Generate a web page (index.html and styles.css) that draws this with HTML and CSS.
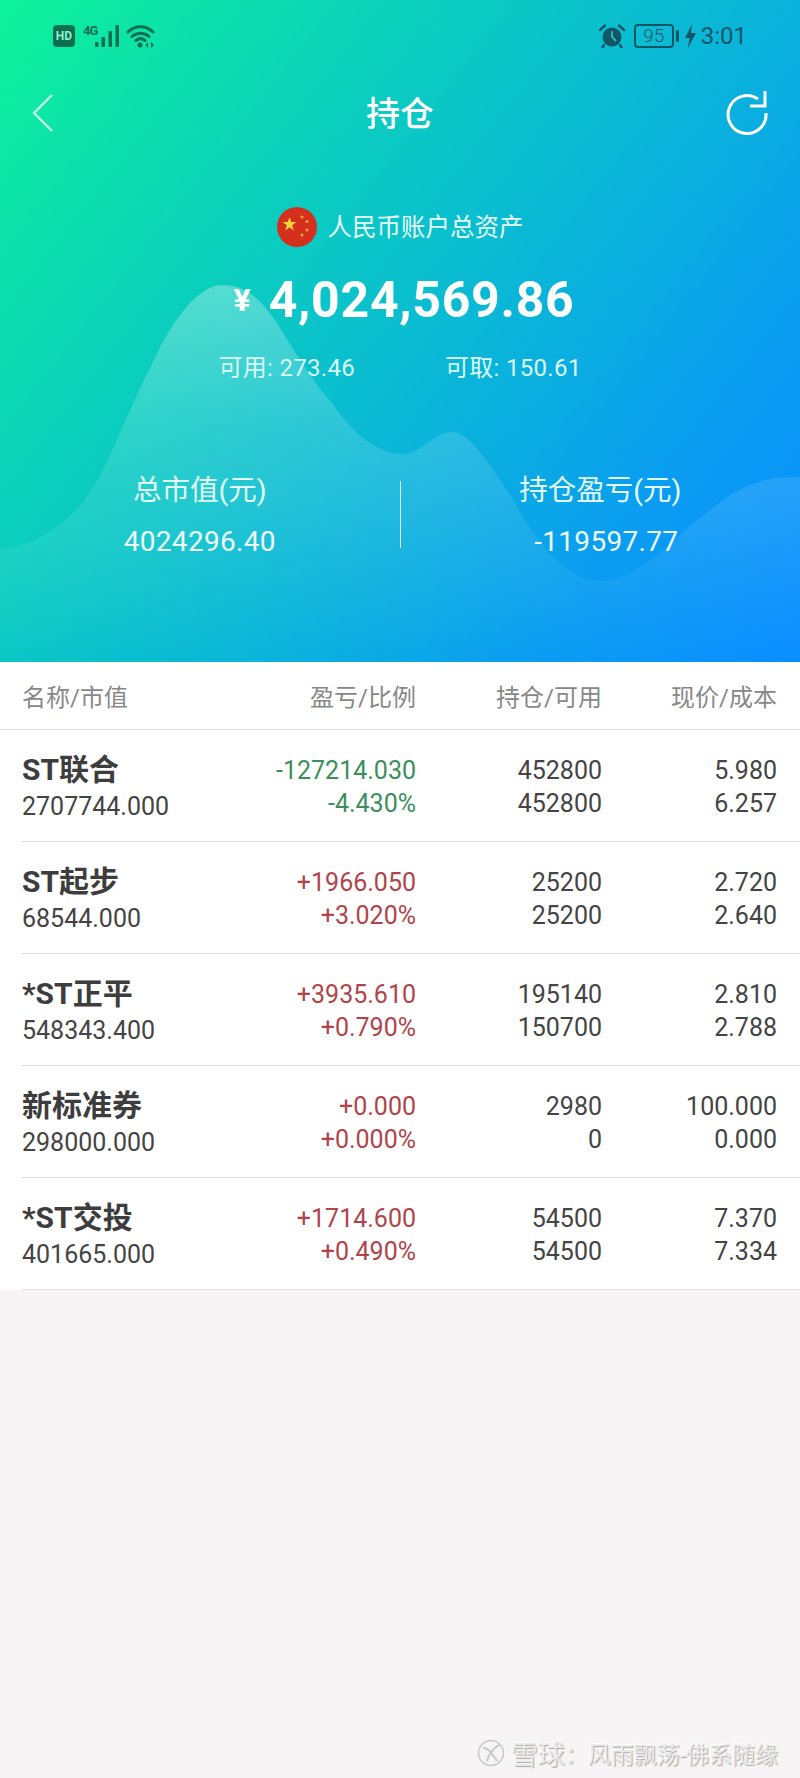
FILE: index.html
```html
<!DOCTYPE html>
<html lang="zh-CN">
<head>
    <meta charset="UTF-8">
    <meta name="viewport" content="width=device-width, initial-scale=1.0">
    <title>持仓</title>
    <link rel="stylesheet" href="styles.css">
</head>
<body>
    <div class="page">
        <div class="hero">
            <svg class="hero-hill" width="800" height="662" viewBox="0 0 800 662">
                <defs>
                    <linearGradient id="hill" x1="0" y1="0" x2="0" y2="1">
                        <stop offset="0" stop-color="#fff" stop-opacity="0.3"/>
                        <stop offset="0.35" stop-color="#fff" stop-opacity="0.15"/>
                        <stop offset="0.7" stop-color="#fff" stop-opacity="0.07"/>
                        <stop offset="1" stop-color="#fff" stop-opacity="0"/>
                    </linearGradient>
                </defs>
                <path fill="url(#hill)" d="M0 549 C30 547 60 530 85 500 C110 465 125 415 153 362 C175 315 200 285 222 285 C250 285 265 305 280 328 C300 360 315 385 332 403 C350 430 375 454 403 454 C420 454 435 432 452 432 C470 432 490 465 510 495 C535 540 565 581 598 581 C640 581 670 540 710 510 C740 485 765 476 800 477 L800 662 L0 662 Z"/>
            </svg>

            <div class="status-bar">
                <div class="status-left">
                    <span class="hd-badge">HD</span>
                    <svg class="signal" width="37" height="24" viewBox="0 0 37 24">
                        <text x="0" y="11" class="signal-text">4G</text>
                        <rect x="12" y="18" width="3.500" height="5" rx="1"/>
                        <rect x="18.500" y="13" width="3.500" height="10" rx="1"/>
                        <rect x="25.500" y="7" width="3.500" height="16" rx="1"/>
                        <rect x="32.500" y="1" width="3.500" height="22" rx="1"/>
                    </svg>
                    <svg class="wifi" width="30" height="24" viewBox="0 0 30 24">
                        <path d="M2 8 C9 1 20 1 27 8 M6 12.500 C11 8 18 8 23 12.500 M10 16.500 C13 14 16 14 19 16.500" fill="none" stroke="#0b6f50" stroke-width="3" stroke-linecap="round"/>
                        <circle cx="14" cy="21" r="2.500" fill="#0b6f50"/>
                        <path d="M22 18 L19.500 21 L22 24 Z M25 18 L28 21 L25 24 Z" fill="#0b6f50"/>
                    </svg>
                </div>
                <div class="status-right">
                    <svg class="alarm" width="26" height="24" viewBox="0 0 26 24">
                        <circle cx="13" cy="13" r="9.500" fill="#0f5666"/>
                        <path d="M13 7 V13 L17 17" fill="none" stroke="#2bbcc0" stroke-width="1.800"/>
                        <path d="M1 6 L6 1.500 M25 6 L20 1.500 M5 21 L3.500 23.500 M21 21 L22.500 23.500" stroke="#0f5666" stroke-width="2.500" stroke-linecap="round"/>
                    </svg>
                    <span class="battery"><span class="battery-level">95</span></span>
                    <span class="battery-cap"></span>
                    <svg class="bolt" width="11" height="24" viewBox="0 0 11 24">
                        <path d="M7 0 L0 14 H4.500 L3 24 L11 9 H6 Z" fill="#0f5666"/>
                    </svg>
                    <span class="clock">3:01</span>
                </div>
            </div>

            <div class="nav">
                <svg class="nav-back" width="24" height="40" viewBox="0 0 24 40">
                    <path d="M21 2 L3 20 L21 38" fill="none" stroke="#c5fbe6" stroke-width="2.400"/>
                </svg>
                <div class="nav-title">持仓</div>
                <svg width="44" height="44" viewBox="0 0 44 44">
                    <path d="M41 22 A19 19 0 1 1 33 8" fill="none" stroke="#fff" stroke-width="3"/>
                    <path d="M40 0 V15 H25" fill="none" stroke="#fff" stroke-width="3"/>
                </svg>
            </div>

            <div class="account">
                <svg class="flag" width="40" height="40" viewBox="0 0 40 40">
                    <circle cx="20" cy="20" r="20" fill="#d5301e"/>
                    <polygon fill="#fbd33a" points="12.500,10 14.200,15 19.500,15 15.200,18.200 16.800,23.500 12.500,20.300 8.200,23.500 9.800,18.200 5.500,15 10.800,15"/>
                    <circle cx="25" cy="10" r="1.500" fill="#f2a93b"/>
                    <circle cx="30" cy="14.500" r="1.500" fill="#f2a93b"/>
                    <circle cx="30" cy="23" r="1.500" fill="#f2a93b"/>
                    <circle cx="25" cy="28" r="1.500" fill="#f2a93b"/>
                </svg>
                <span class="account-label">人民币账户总资产</span>
            </div>

            <div class="total">
                <span class="total-yen">¥</span>
                <span class="total-value">4,024,569.86</span>
            </div>

            <div class="funds">
                <span>可用: 273.46</span>
                <span>可取: 150.61</span>
            </div>

            <div class="summary">
                <div class="summary-col">
                    <div class="summary-label">总市值(元)</div>
                    <div class="summary-value">4024296.40</div>
                </div>
                <div class="summary-divider"></div>
                <div class="summary-col">
                    <div class="summary-label">持仓盈亏(元)</div>
                    <div class="summary-value summary-loss">-119597.77</div>
                </div>
            </div>
        </div>

        <div class="table">
            <div class="table-head">
                <span class="col-name">名称/市值</span>
                <span class="col-profit">盈亏/比例</span>
                <span class="col-qty">持仓/可用</span>
                <span class="col-price">现价/成本</span>
            </div>

            <div class="table-row">
                <div class="col-name">
                    <div class="stock-name">ST联合</div>
                    <div class="stock-value">2707744.000</div>
                </div>
                <div class="col-profit down"><div>-127214.030</div><div>-4.430%</div></div>
                <div class="col-qty"><div>452800</div><div>452800</div></div>
                <div class="col-price"><div>5.980</div><div>6.257</div></div>
            </div>

            <div class="table-row">
                <div class="col-name">
                    <div class="stock-name">ST起步</div>
                    <div class="stock-value">68544.000</div>
                </div>
                <div class="col-profit up"><div>+1966.050</div><div>+3.020%</div></div>
                <div class="col-qty"><div>25200</div><div>25200</div></div>
                <div class="col-price"><div>2.720</div><div>2.640</div></div>
            </div>

            <div class="table-row">
                <div class="col-name">
                    <div class="stock-name">*ST正平</div>
                    <div class="stock-value">548343.400</div>
                </div>
                <div class="col-profit up"><div>+3935.610</div><div>+0.790%</div></div>
                <div class="col-qty"><div>195140</div><div>150700</div></div>
                <div class="col-price"><div>2.810</div><div>2.788</div></div>
            </div>

            <div class="table-row">
                <div class="col-name">
                    <div class="stock-name">新标准券</div>
                    <div class="stock-value">298000.000</div>
                </div>
                <div class="col-profit up"><div>+0.000</div><div>+0.000%</div></div>
                <div class="col-qty"><div>2980</div><div>0</div></div>
                <div class="col-price"><div>100.000</div><div>0.000</div></div>
            </div>

            <div class="table-row">
                <div class="col-name">
                    <div class="stock-name">*ST交投</div>
                    <div class="stock-value">401665.000</div>
                </div>
                <div class="col-profit up"><div>+1714.600</div><div>+0.490%</div></div>
                <div class="col-qty"><div>54500</div><div>54500</div></div>
                <div class="col-price"><div>7.370</div><div>7.334</div></div>
            </div>
        </div>

        <div class="watermark">
            <svg class="watermark-logo" width="28" height="28" viewBox="0 0 28 28">
                <circle cx="14" cy="14" r="12.500" fill="none" stroke="#c9c6c7" stroke-width="1.500"/>
                <path d="M6 9 C11 8 15 15 20 22 M22 6 C17 9 12 14 10 22" fill="none" stroke="#c9c6c7" stroke-width="2"/>
            </svg>
            <span class="watermark-site">雪球</span>
            <span class="watermark-user">：风雨飘荡-佛系随缘</span>
        </div>
    </div>
</body>
</html>
```

FILE: styles.css
```css
* {
    box-sizing: border-box;
}
body {
    margin: 0;
    background-color: #f7f4f5;
    font-family: Roboto, "Noto Sans CJK SC", sans-serif;
}
.page {
    width: 800px;
    height: 1778px;
    display: flex;
    flex-direction: column;
    overflow: hidden;
}

/* top gradient block */
.hero {
    position: relative;
    height: 662px;
    color: #ffffff;
    background: linear-gradient(128deg, #0ef29a 0%, #0bd3b8 28%, #0ab8d6 55%, #0a9cf2 80%, #0a8dff 100%);
}
.hero-hill {
    position: absolute;
    top: 0;
    left: 0;
}
.status-bar {
    position: relative;
    display: flex;
    justify-content: space-between;
    align-items: center;
    height: 71px;
    padding: 0 53px;
}
.status-left,
.status-right {
    display: flex;
    align-items: center;
}
.hd-badge {
    width: 22px;
    height: 22px;
    margin-right: 8px;
    border-radius: 4px;
    background-color: #0b6f50;
    color: #8ff0cb;
    font-size: 12px;
    font-weight: 700;
    line-height: 22px;
    text-align: center;
}
.signal {
    margin-right: 6px;
    fill: #0b6f50;
}
.signal-text {
    font-size: 13px;
    font-weight: 700;
    letter-spacing: -1px;
}
.alarm {
    margin-right: 9px;
}
.battery {
    width: 40px;
    height: 24px;
    border: 2px solid #0f5666;
    border-radius: 4px;
    text-align: center;
}
.battery-level {
    color: #0f5666;
    font-size: 19px;
    font-weight: 300;
    line-height: 20px;
    display: block;
}
.battery-cap {
    width: 3px;
    height: 12px;
    margin: 0 6px 0 2px;
    background-color: #0f5666;
    border-radius: 1px;
}
.bolt {
    margin-right: 5px;
}
.clock {
    color: #0f5666;
    font-size: 24px;
}
.nav {
    position: relative;
    display: flex;
    align-items: center;
    height: 48px;
    padding: 0 31px;
    margin-top: 18px;
}
.nav-back {
    margin-right: 20px;
}
.nav-title {
    flex: 1;
    padding-top: 2px;
    font-size: 34px;
    font-weight: 500;
    line-height: 48px;
    text-align: center;
}
.account {
    position: relative;
    display: flex;
    justify-content: center;
    align-items: center;
    gap: 11px;
    margin-top: 70px;
    height: 40px;
}
.account-label {
    padding-bottom: 3px;
    font-size: 24.5px;
    color: #e6fdf8;
}
.total {
    position: relative;
    display: flex;
    justify-content: center;
    align-items: center;
    gap: 18px;
    margin-top: 23px;
    padding-left: 8px;
    height: 60px;
}
.total-yen {
    font-size: 32px;
    font-weight: 700;
}
.total-value {
    font-size: 50px;
    font-weight: 700;
    letter-spacing: 0.7px;
}
.funds {
    position: relative;
    display: flex;
    justify-content: center;
    gap: 90px;
    margin-top: 21px;
    font-size: 24px;
    letter-spacing: 0.3px;
    line-height: 34px;
    color: #dcfaf5;
}
.summary {
    position: relative;
    display: flex;
    align-items: center;
    margin-top: 87px;
    height: 88px;
}
.summary-col {
    flex: 1;
    text-align: center;
}
.summary-label {
    font-size: 28.5px;
    line-height: 36px;
    color: #e2fbf8;
}
.summary-value {
    margin-top: 15px;
    font-size: 28px;
    line-height: 36px;
    letter-spacing: 0.3px;
    color: #eefdfb;
}
.summary-loss {
    padding-left: 12px;
}
.summary-divider {
    width: 1px;
    height: 67px;
    margin-top: -4px;
    background-color: #e2fbf8;
}

/* holdings table */
.table {
    background-color: #ffffff;
}
.table-head {
    display: flex;
    align-items: center;
    height: 68px;
    padding: 0 23px 0 22px;
    border-bottom: 1px solid #dedede;
    font-size: 24px;
    color: #888888;
}
.table-row {
    display: flex;
    align-items: center;
    height: 112px;
    margin-left: 22px;
    padding: 2px 23px 0 0;
    border-bottom: 1px solid #dedede;
    font-size: 25px;
    line-height: 33px;
    color: #444444;
}
.table-row .col-name {
    padding-top: 3px;
}
.col-name {
    width: 201px;
}
.col-profit {
    width: 193px;
    text-align: right;
}
.col-qty {
    width: 186px;
    text-align: right;
}
.col-price {
    width: 175px;
    text-align: right;
}
.stock-name {
    font-size: 30px;
    font-weight: 700;
    line-height: 38px;
    white-space: nowrap;
    color: #3d3d3d;
}
.stock-value {
    font-size: 25px;
    line-height: 36px;
}
.up {
    color: #b0444a;
}
.down {
    color: #3a8f5c;
}

/* embossed site mark at the bottom */
.watermark {
    display: flex;
    justify-content: flex-end;
    align-items: center;
    margin-top: auto;
    height: 28px;
    margin-bottom: 11px;
    padding-right: 22px;
    color: #ece9ea;
    text-shadow: 1px 1px 1px #a9a6a7, -1px -1px 0 #ffffff;
    white-space: nowrap;
}
.watermark-logo {
    margin-right: 6px;
}
.watermark-site {
    font-size: 27px;
}
.watermark-user {
    font-size: 23px;
}
```
